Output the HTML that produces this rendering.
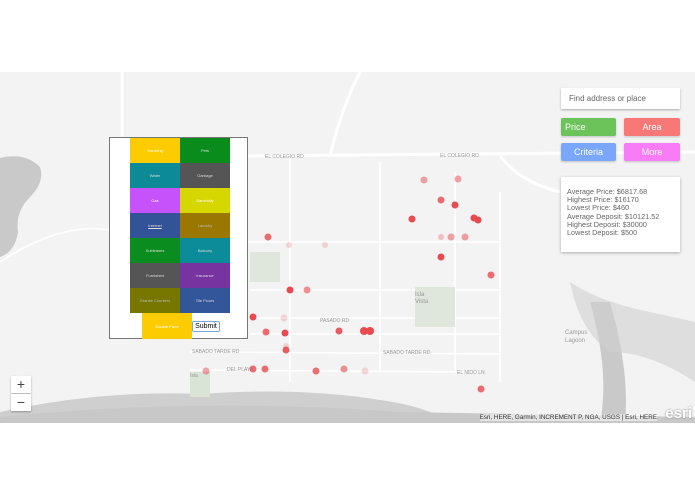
<!DOCTYPE html>
<html><head><style>
body{margin:0;width:695px;height:494px;background:#fff;position:relative;overflow:hidden;font-family:"Liberation Sans",sans-serif}
#map{position:absolute;left:0;top:72px;width:695px;height:351px;background:#f3f3f3;overflow:hidden}
.pop{position:absolute;left:109px;top:137px;width:139px;height:202px;background:#fff;border:1px solid #777;box-sizing:border-box}
.c{position:absolute;width:50px;height:25px;font-size:4px;color:#ddd;display:flex;align-items:center;justify-content:center}
.btn{position:absolute;height:18px;border-radius:2px;color:#fff;font-size:9px;display:flex;align-items:center;justify-content:center;box-shadow:0 1px 2px rgba(0,0,0,.2)}
.stats{position:absolute;left:561px;top:177px;width:119px;height:75px;background:#fff;box-shadow:0 1px 3px rgba(0,0,0,.3);font-size:7.3px;color:#666;line-height:8.2px;padding:11px 0 0 6px;box-sizing:border-box}
.zm{position:absolute;left:11px;width:20px;height:17px;background:#fff;font-size:14px;color:#444;text-align:center;line-height:16px;box-shadow:0 1px 2px rgba(0,0,0,.3)}
</style></head><body>
<div id="map">
<svg width="695" height="351" style="position:absolute;left:0;top:0">
<path d="M0 86 Q25 80 40 95 Q45 110 30 125 Q15 140 18 160 Q15 180 0 185Z" fill="#c9c9c9"/>
<path d="M0 351 L0 340 Q100 318 200 322 Q300 315 380 328 Q430 335 450 351Z" fill="#cfcfcf"/>
<path d="M0 351 L0 345 Q200 325 400 340 L695 345 L695 351Z" fill="#c8c8c8"/>
<path d="M590 230 Q610 300 600 351 L625 351 Q630 300 610 230Z" fill="#c9c9c9"/>
<path d="M570 210 Q600 230 650 240 L695 250 L695 310 Q650 280 610 280 Q580 260 570 210Z" fill="#d0d0d0" opacity=".6"/>
<g stroke="#fff" stroke-width="3" fill="none">
<line x1="122" y1="0" x2="122" y2="140"/><line x1="245" y1="84" x2="695" y2="80"/>
<path d="M330 84 Q340 40 360 0"/><path d="M500 84 Q520 110 560 120"/>
</g>
<g stroke="#fff" stroke-width="1.5" fill="none">
<line x1="290" y1="84" x2="290" y2="310"/><line x1="380" y1="90" x2="380" y2="300"/><line x1="455" y1="100" x2="455" y2="300"/><line x1="500" y1="120" x2="500" y2="310"/>
<line x1="190" y1="280" x2="500" y2="282"/><line x1="190" y1="298" x2="480" y2="300"/><line x1="240" y1="170" x2="500" y2="170"/><line x1="250" y1="218" x2="500" y2="218"/><line x1="250" y1="246" x2="500" y2="246"/><line x1="250" y1="262" x2="500" y2="262"/>
<path d="M0 190 Q60 150 110 158"/>
</g>
<rect x="190" y="300" width="20" height="25" fill="#d9e3d6"/><rect x="415" y="215" width="40" height="40" fill="#dfe7dc"/><rect x="250" y="180" width="30" height="30" fill="#dfe7dc"/>
<g font-size="5" fill="#999" font-family="Liberation Sans">
<text x="265" y="86">EL COLEGIO RD</text><text x="440" y="85">EL COLEGIO RD</text>
<text x="320" y="250">PASADO RD</text><text x="192" y="281">SABADO TARDE RD</text><text x="383" y="282">SABADO TARDE RD</text><text x="227" y="299">DEL PLAYA</text><text x="457" y="302">EL NIDO LN</text><text x="415" y="224" font-size="6">Isla</text><text x="415" y="231" font-size="6">Vista</text><text x="190" y="305" font-size="5">Isla</text><text x="565" y="262" font-size="6">Campus</text><text x="565" y="270" font-size="6">Lagoon</text>
</g>
<g fill="#e84a4f">
<circle cx="268" cy="165" r="3.5" opacity=".8"/><circle cx="289" cy="173" r="3" opacity=".2"/><circle cx="325" cy="173" r="3" opacity=".2"/>
<circle cx="290" cy="218" r="3.5"/><circle cx="307" cy="218" r="3.5" opacity=".6"/>
<circle cx="253" cy="245" r="3.5"/><circle cx="284" cy="246" r="3.5" opacity=".2"/><circle cx="266" cy="260" r="3.5" opacity=".8"/><circle cx="285" cy="261" r="3.5"/><circle cx="339" cy="259" r="3.5" opacity=".9"/><circle cx="364" cy="259" r="4"/><circle cx="370" cy="259" r="4"/>
<circle cx="286" cy="278" r="3.5" opacity=".9"/><circle cx="286" cy="274" r="3" opacity=".2"/>
<circle cx="206" cy="299" r="3.5" opacity=".5"/><circle cx="253" cy="297" r="3.5" opacity=".8"/><circle cx="265" cy="297" r="3.5" opacity=".8"/><circle cx="316" cy="299" r="3.5" opacity=".8"/><circle cx="344" cy="297" r="3.5" opacity=".6"/><circle cx="365" cy="299" r="3.5" opacity=".2"/><circle cx="481" cy="317" r="3.5" opacity=".8"/>
<circle cx="424" cy="108" r="3.5" opacity=".5"/><circle cx="458" cy="107" r="3.5" opacity=".5"/><circle cx="441" cy="128" r="3.5" opacity=".8"/><circle cx="455" cy="133" r="3.5"/><circle cx="412" cy="147" r="3.5"/><circle cx="474" cy="146" r="3.5"/><circle cx="478" cy="148" r="3.5"/><circle cx="441" cy="165" r="3" opacity=".3"/><circle cx="451" cy="165" r="3.5" opacity=".5"/><circle cx="465" cy="165" r="3.5" opacity=".5"/><circle cx="441" cy="185" r="3.5"/><circle cx="491" cy="203" r="3.5" opacity=".8"/>
</g>
</svg>
<div style="position:absolute;left:561px;top:16px;width:119px;height:21px;background:#fff;box-shadow:0 1px 2px rgba(0,0,0,.3);font-size:8px;color:#666;line-height:21px;padding-left:8px;box-sizing:border-box">Find address or place</div>
<div class="btn" style="left:561px;top:46px;width:55px;background:#6cc35a;justify-content:flex-start;padding-left:4px;box-sizing:border-box">Price</div>
<div class="btn" style="left:624px;top:46px;width:56px;background:#f87878">Area</div>
<div class="btn" style="left:561px;top:71px;width:55px;background:#7aa7fb">Criteria</div>
<div class="btn" style="left:624px;top:71px;width:56px;background:#f77cf5">More</div>
<div class="zm" style="top:304px">+</div><div class="zm" style="top:322px">−</div>
<div style="position:absolute;right:38px;bottom:2px;font-size:6.3px;color:#333;background:rgba(255,255,255,.5)">Esri, HERE, Garmin, INCREMENT P, NGA, USGS | Esri, HERE</div>
<div style="position:absolute;right:3px;bottom:1px;font-size:15px;font-weight:bold;color:#fff;text-shadow:0 0 2px #888">esri</div>
</div>
<div class="stats">Average Price: $6817.68<br>Highest Price: $16170<br>Lowest Price: $460<br>Average Deposit: $10121.52<br>Highest Deposit: $30000<br>Lowest Deposit: $500</div>
<div class="pop">
<div class="c" style="left:20px;top:0;background:#fccc00;color:#fff">Smoking</div>
<div class="c" style="left:70px;top:0;background:#0a8c1c">Pets</div>
<div class="c" style="left:20px;top:25px;background:#0c8a98">Water</div>
<div class="c" style="left:70px;top:25px;background:#555">Garbage</div>
<div class="c" style="left:20px;top:50px;background:#c652fb;color:#fff">Gas</div>
<div class="c" style="left:70px;top:50px;background:#d6d600;color:#fff">Electricity</div>
<div class="c" style="left:20px;top:75px;background:#335399;text-decoration:underline">Internet</div>
<div class="c" style="left:70px;top:75px;background:#997700;color:#bbb">Laundry</div>
<div class="c" style="left:20px;top:100px;background:#0b8c1e">Subleases</div>
<div class="c" style="left:70px;top:100px;background:#0c8c99">Balcony</div>
<div class="c" style="left:20px;top:125px;background:#555">Furnished</div>
<div class="c" style="left:70px;top:125px;background:#7733a0">Insurance</div>
<div class="c" style="left:20px;top:150px;background:#777700;color:#bbb">Granite Counters</div>
<div class="c" style="left:70px;top:150px;background:#335599">Tile Floors</div>
<div class="c" style="left:32px;top:175px;height:26px;background:#fccc00;color:#fff">Double Pane</div>
<div style="position:absolute;left:82px;top:183px;width:26px;height:9px;border:1px solid #7aa7d8;border-radius:2px;font-size:7px;line-height:9px;text-align:center;background:#fff">Submit</div>
</div>
</body></html>
